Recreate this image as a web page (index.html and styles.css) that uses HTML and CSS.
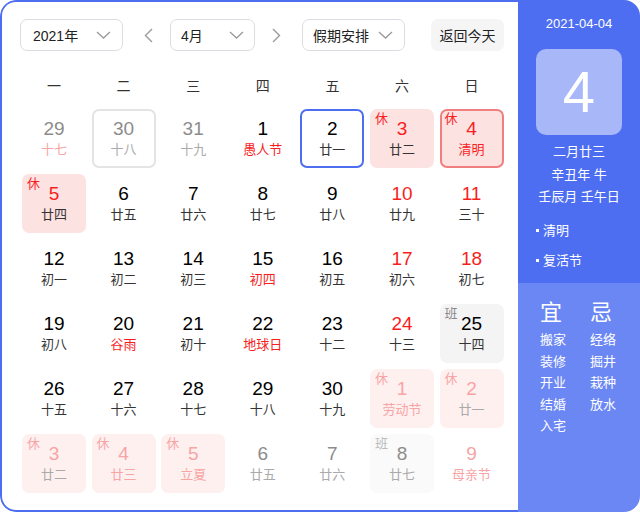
FILE: index.html
```html
<!DOCTYPE html>
<html lang="zh-CN">
<head>
<meta charset="utf-8">
<title>万年历</title>
<link rel="stylesheet" href="styles.css">
</head>
<body>
<div class="cal">
  <div class="main">
    <div class="toolbar">
      <div class="select sel-year"><span>2021年</span><svg class="chev" width="15" height="8" viewBox="0 0 15 8"><polyline points="1,1 7.5,7 14,1" fill="none" stroke="#9a9a9a" stroke-width="1.3"/></svg></div>
      <svg class="arrow arrow-l" width="9" height="15" viewBox="0 0 9 15"><polyline points="8,1 1.5,7.5 8,14" fill="none" stroke="#9a9a9a" stroke-width="1.4"/></svg>
      <div class="select sel-month"><span>4月</span><svg class="chev" width="15" height="8" viewBox="0 0 15 8"><polyline points="1,1 7.5,7 14,1" fill="none" stroke="#9a9a9a" stroke-width="1.3"/></svg></div>
      <svg class="arrow arrow-r" width="9" height="15" viewBox="0 0 9 15"><polyline points="1,1 7.5,7.5 1,14" fill="none" stroke="#9a9a9a" stroke-width="1.4"/></svg>
      <div class="select sel-hol"><span>假期安排</span><svg class="chev" width="15" height="8" viewBox="0 0 15 8"><polyline points="1,1 7.5,7 14,1" fill="none" stroke="#9a9a9a" stroke-width="1.3"/></svg></div>
      <div class="today-btn">返回今天</div>
    </div>
    <div class="weekdays">
      <div>一</div><div>二</div><div>三</div><div>四</div><div>五</div><div>六</div><div>日</div>
    </div>
    <div class="grid">
      <div class="cell other"><span class="num">29</span><span class="lunar pink">十七</span></div>
      <div class="cell other hover"><span class="num">30</span><span class="lunar">十八</span></div>
      <div class="cell other"><span class="num">31</span><span class="lunar">十九</span></div>
      <div class="cell"><span class="num">1</span><span class="lunar red">愚人节</span></div>
      <div class="cell today"><span class="num">2</span><span class="lunar">廿一</span></div>
      <div class="cell rest"><i class="tag">休</i><span class="num red">3</span><span class="lunar">廿二</span></div>
      <div class="cell rest selected"><i class="tag">休</i><span class="num red">4</span><span class="lunar red">清明</span></div>

      <div class="cell rest"><i class="tag">休</i><span class="num red">5</span><span class="lunar">廿四</span></div>
      <div class="cell"><span class="num">6</span><span class="lunar">廿五</span></div>
      <div class="cell"><span class="num">7</span><span class="lunar">廿六</span></div>
      <div class="cell"><span class="num">8</span><span class="lunar">廿七</span></div>
      <div class="cell"><span class="num">9</span><span class="lunar">廿八</span></div>
      <div class="cell"><span class="num red">10</span><span class="lunar">廿九</span></div>
      <div class="cell"><span class="num red">11</span><span class="lunar">三十</span></div>

      <div class="cell"><span class="num">12</span><span class="lunar">初一</span></div>
      <div class="cell"><span class="num">13</span><span class="lunar">初二</span></div>
      <div class="cell"><span class="num">14</span><span class="lunar">初三</span></div>
      <div class="cell"><span class="num">15</span><span class="lunar red">初四</span></div>
      <div class="cell"><span class="num">16</span><span class="lunar">初五</span></div>
      <div class="cell"><span class="num red">17</span><span class="lunar">初六</span></div>
      <div class="cell"><span class="num red">18</span><span class="lunar">初七</span></div>

      <div class="cell"><span class="num">19</span><span class="lunar">初八</span></div>
      <div class="cell"><span class="num">20</span><span class="lunar red">谷雨</span></div>
      <div class="cell"><span class="num">21</span><span class="lunar">初十</span></div>
      <div class="cell"><span class="num">22</span><span class="lunar red">地球日</span></div>
      <div class="cell"><span class="num">23</span><span class="lunar">十二</span></div>
      <div class="cell"><span class="num red">24</span><span class="lunar">十三</span></div>
      <div class="cell work"><i class="tag">班</i><span class="num">25</span><span class="lunar">十四</span></div>

      <div class="cell"><span class="num">26</span><span class="lunar">十五</span></div>
      <div class="cell"><span class="num">27</span><span class="lunar">十六</span></div>
      <div class="cell"><span class="num">28</span><span class="lunar">十七</span></div>
      <div class="cell"><span class="num">29</span><span class="lunar">十八</span></div>
      <div class="cell"><span class="num">30</span><span class="lunar">十九</span></div>
      <div class="cell other rest"><i class="tag">休</i><span class="num">1</span><span class="lunar pink">劳动节</span></div>
      <div class="cell other rest"><i class="tag">休</i><span class="num">2</span><span class="lunar">廿一</span></div>

      <div class="cell other rest"><i class="tag">休</i><span class="num">3</span><span class="lunar">廿二</span></div>
      <div class="cell other rest"><i class="tag">休</i><span class="num">4</span><span class="lunar pink">廿三</span></div>
      <div class="cell other rest"><i class="tag">休</i><span class="num">5</span><span class="lunar pink">立夏</span></div>
      <div class="cell other"><span class="num">6</span><span class="lunar">廿五</span></div>
      <div class="cell other"><span class="num">7</span><span class="lunar">廿六</span></div>
      <div class="cell other work"><i class="tag">班</i><span class="num">8</span><span class="lunar">廿七</span></div>
      <div class="cell other"><span class="num pink">9</span><span class="lunar pink">母亲节</span></div>
    </div>
  </div>
  <div class="side">
    <div class="side-top">
      <div class="s-date">2021-04-04</div>
      <div class="s-big">4</div>
      <div class="s-lunar">
        <div>二月廿三</div>
        <div>辛丑年 牛</div>
        <div>壬辰月 壬午日</div>
      </div>
      <ul class="s-fest">
        <li>清明</li>
        <li>复活节</li>
      </ul>
    </div>
    <div class="side-bottom">
      <div class="yj">
        <div class="yj-head">宜</div>
        <div class="yj-item">搬家</div>
        <div class="yj-item">装修</div>
        <div class="yj-item">开业</div>
        <div class="yj-item">结婚</div>
        <div class="yj-item">入宅</div>
      </div>
      <div class="yj">
        <div class="yj-head">忌</div>
        <div class="yj-item">经络</div>
        <div class="yj-item">掘井</div>
        <div class="yj-item">栽种</div>
        <div class="yj-item">放水</div>
      </div>
    </div>
  </div>
</div>
</body>
</html>
```
FILE: styles.css
```css
* { box-sizing: border-box; }
html, body { margin: 0; padding: 0; background: #fff; }
body {
  font-family: "Liberation Sans", "Noto Sans CJK SC", sans-serif;
  color: #000;
}
.cal {
  width: 640px;
  height: 512px;
  display: flex;
  border-radius: 16px;
  overflow: hidden;
}
.main {
  width: 518px;
  height: 512px;
  border: 2px solid #4e6ef2;
  border-right: none;
  border-radius: 16px 0 0 16px;
  padding: 17px 0 0 18px;
  background: #fff;
}
.toolbar {
  display: flex;
  align-items: center;
  height: 32px;
}
.select {
  height: 32px;
  border: 1px solid #dcdde3;
  border-radius: 7px;
  display: flex;
  align-items: center;
  justify-content: space-between;
  font-size: 14px;
  color: #222;
}
.sel-year { width: 103px; padding: 0 11px 0 12px; }
.sel-month { width: 85px; padding: 0 10px 0 10px; }
.sel-hol { width: 103px; padding: 0 11px 0 10px; }
.chev { display: block; }
.arrow { display: block; }
.arrow-l { margin: 0 17px 0 21px; }
.arrow-r { margin: 0 21px 0 17px; }
.today-btn {
  margin-left: 26px;
  width: 73px;
  height: 32px;
  border-radius: 7px;
  background: #f5f5f6;
  font-size: 14px;
  color: #222;
  display: flex;
  align-items: center;
  justify-content: center;
}
.weekdays {
  margin: 24px 0 0 2px;
  display: grid;
  grid-template-columns: repeat(7, 64px);
  column-gap: 5.6px;
  height: 22px;
  line-height: 22px;
  font-size: 14px;
  color: #333;
  text-align: center;
}
.grid {
  margin: 12px 0 0 2px;
  display: grid;
  grid-template-columns: repeat(7, 64px);
  grid-auto-rows: 59px;
  column-gap: 5.6px;
  row-gap: 6px;
}
.cell {
  position: relative;
  border: 2px solid transparent;
  border-radius: 7px;
  display: flex;
  flex-direction: column;
  align-items: center;
  padding-top: 7px;
}
.num {
  font-size: 19px;
  line-height: 22px;
  height: 22px;
  color: #000;
}
.lunar {
  margin-top: 1px;
  font-size: 13px;
  line-height: 18px;
  color: #333;
  white-space: nowrap;
}
.red { color: #f81e1e !important; }
.pink { color: #f7a4a4 !important; }
.tag {
  position: absolute;
  left: 3px;
  top: 0px;
  font-style: normal;
  font-size: 13px;
  line-height: 16px;
  color: #f81e1e;
}
.rest { background: #fde2e2; }
.selected { border-color: #f07f7f; }
.today { border-color: #4e6ef2; }
.hover { border-color: #e4e4e6; }
.work { background: #f4f4f5; }
.work .tag { color: #888; }
.other .num { color: #8c8c8c; }
.other .lunar { color: #aaa; }
.other.rest { background: #fff0f0; }
.other.rest .num, .other.rest .tag { color: #f7a4a4; }
.other.work { background: #fafafa; }
.other.work .tag { color: #bbb; }
.other.work .num { color: #8c8c8c; }

.side {
  width: 122px;
  height: 512px;
  display: flex;
  flex-direction: column;
  color: #fff;
}
.side-top {
  height: 283px;
  background: #4e6ef2;
  padding-top: 14px;
  display: flex;
  flex-direction: column;
  align-items: center;
}
.s-date {
  font-size: 13px;
  line-height: 20px;
}
.s-big {
  margin-top: 15px;
  width: 86px;
  height: 86px;
  border-radius: 10px;
  background: #a8b7f8;
  font-size: 58px;
  line-height: 86px;
  text-align: center;
}
.s-lunar {
  margin-top: 6px;
  font-size: 13px;
  line-height: 22.5px;
  text-align: center;
}
.s-fest {
  list-style: none;
  margin: 12px 0 0 0;
  padding: 0 0 0 18px;
  align-self: stretch;
  font-size: 13px;
}
.s-fest li {
  line-height: 20px;
  margin-bottom: 10px;
  display: flex;
  align-items: center;
}
.s-fest li::before {
  content: "";
  width: 3px;
  height: 3px;
  background: #fff;
  margin-right: 4px;
}
.side-bottom {
  flex: 1;
  background: #6b87f4;
  padding: 16px 0 0 22px;
  display: flex;
}
.yj { width: 58px; }
.yj-head {
  font-size: 22px;
  line-height: 28px;
}
.yj-item {
  font-size: 13px;
  line-height: 21.5px;
}
.yj-head + .yj-item { margin-top: 2px; }
```
